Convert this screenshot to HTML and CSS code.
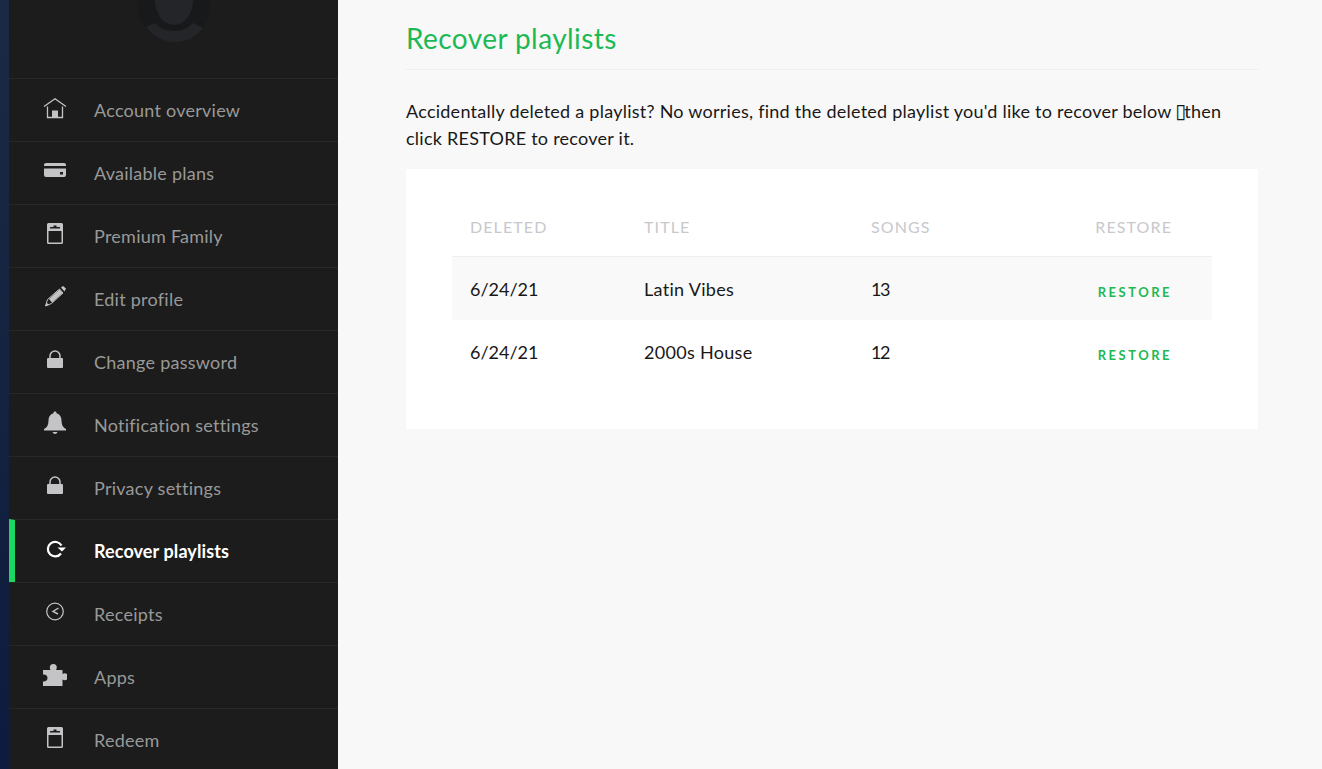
FILE: index.html
```html
<!DOCTYPE html>
<html lang="en">
<head>
<meta charset="utf-8">
<title>Recover playlists</title>
<link rel="stylesheet" href="styles.css">
</head>
<body>
<div class="strip"></div>
<aside class="sidebar">
  <div class="avatar">
    <svg width="72" height="42" viewBox="0 0 72 42"><circle cx="36" cy="6" r="36" fill="#17191a"/><path d="M8 27L17 23Q24 31 36 31Q48 31 55 23L65 28A36 36 0 0 1 36 42A36 36 0 0 1 8 27Z" fill="#242528"/><ellipse cx="36" cy="0" rx="19" ry="25" fill="#242528"/></svg>
  </div>
  <nav class="nav">
    <a class="item"><svg class="ico" viewBox="0 0 24 24"><path d="M1 10.500L12 2.800L23 10.500" fill="none" stroke="currentColor" stroke-width="1.300"/><path d="M4.500 10.500V21.500H19.500V10.500" fill="none" stroke="currentColor" stroke-width="1.300"/><path d="M9 21.500V14.500H15V21.500Z" fill="currentColor"/></svg><span>Account overview</span></a>
    <a class="item"><svg class="ico" viewBox="0 0 24 24"><path d="M3 4H21A2 2 0 0 1 23 6V7H1V6A2 2 0 0 1 3 4ZM1 9.500H23V16A2 2 0 0 1 21 18H3A2 2 0 0 1 1 16ZM17 13V15.500H20V13Z" fill="currentColor" fill-rule="evenodd"/></svg><span>Available plans</span></a>
    <a class="item"><svg class="ico" viewBox="0 0 24 24"><path d="M5.500 1H18.500A1.500 1.500 0 0 1 20 2.500V20.500A1.500 1.500 0 0 1 18.500 22H5.500A1.500 1.500 0 0 1 4 20.500V2.500A1.500 1.500 0 0 1 5.500 1ZM5.500 9V20.500H18.500V9ZM7 5V6.500H17V5H13.500V3.500H10.500V5Z" fill="currentColor" fill-rule="evenodd"/></svg><span>Premium Family</span></a>
    <a class="item"><svg class="ico" viewBox="0 0 24 24"><path d="M2.500 21L4.500 14.500L16.500 4L20 8L8.500 18.500Z" fill="none" stroke="currentColor" stroke-width="1"/><path d="M6 14L16.500 4.500L19.500 8L9 17.500Z" fill="currentColor"/><path d="M18 2.500L20 1L23 3.500L21.500 6.500Z" fill="currentColor"/><path d="M2.500 21L3.500 17.500L6 20Z" fill="currentColor"/></svg><span>Edit profile</span></a>
    <a class="item"><svg class="ico" viewBox="0 0 24 24"><path d="M7 10V8A5 5 0 0 1 17 8V10" fill="none" stroke="currentColor" stroke-width="1.500"/><rect x="4" y="10" width="16" height="10" rx="1" fill="currentColor"/></svg><span>Change password</span></a>
    <a class="item"><svg class="ico" viewBox="0 0 24 24"><path d="M12 0.500C13 0.500 13.500 1.200 13.500 2.200C17 3.200 18.500 6 18.500 9.500C18.500 14 20 16.500 23 18V19.500H1V18C4 16.500 5.500 14 5.500 9.500C5.500 6 7 3.200 10.500 2.200C10.500 1.200 11 0.500 12 0.500ZM9.500 21H14.500C14 22.300 13 23 12 23C11 23 10 22.300 9.500 21Z" fill="currentColor"/></svg><span>Notification settings</span></a>
    <a class="item"><svg class="ico" viewBox="0 0 24 24"><path d="M7 10V8A5 5 0 0 1 17 8V10" fill="none" stroke="currentColor" stroke-width="1.500"/><rect x="4" y="10" width="16" height="10" rx="1" fill="currentColor"/></svg><span>Privacy settings</span></a>
    <a class="item active"><svg class="ico" viewBox="0 0 24 24"><path d="M18.500 8.500A7.300 7.300 0 1 0 18 16.500" fill="none" stroke="currentColor" stroke-width="2.200"/><path d="M14.500 10.500H23L19 14.500Z" fill="currentColor"/></svg><span>Recover playlists</span></a>
    <a class="item"><svg class="ico" viewBox="0 0 24 24"><circle cx="12" cy="11.500" r="8.300" fill="none" stroke="currentColor" stroke-width="1.200"/><path d="M15.500 8L10 11.500L15 14" fill="none" stroke="currentColor" stroke-width="1.400"/></svg><span>Receipts</span></a>
    <a class="item"><svg class="ico" viewBox="0 0 24 24"><path d="M0 7H7.500C7 6 6.800 5.500 6.800 4.500A3.500 3.500 0 0 1 13.800 4.500C13.800 5.500 13.500 6 13 7H19.500V11C20.200 10.500 21 10.300 21.500 10.300A3.500 3.500 0 0 1 21.500 17.300C21 17.300 20.200 17 19.500 16.500V23H0V18.500C2.500 18.800 4.500 17.500 4.500 15C4.500 12.500 2.500 11 0 11.500Z" fill="currentColor"/></svg><span>Apps</span></a>
    <a class="item"><svg class="ico" viewBox="0 0 24 24"><path d="M5.500 1H18.500A1.500 1.500 0 0 1 20 2.500V20.500A1.500 1.500 0 0 1 18.500 22H5.500A1.500 1.500 0 0 1 4 20.500V2.500A1.500 1.500 0 0 1 5.500 1ZM5.500 9V20.500H18.500V9ZM7 5V6.500H17V5H13.500V3.500H10.500V5Z" fill="currentColor" fill-rule="evenodd"/></svg><span>Redeem</span></a>
  </nav>
</aside>
<main class="main">
  <h1 class="title">Recover playlists</h1>
  <p class="intro">Accidentally deleted a playlist? No worries, find the deleted playlist you'd like to recover below <span class="tofu">▯</span>then click RESTORE to recover it.</p>
  <section class="card">
    <table class="table">
      <thead>
        <tr><th class="c1">Deleted</th><th class="c2">Title</th><th class="c3">Songs</th><th class="c4">Restore</th></tr>
      </thead>
      <tbody>
        <tr class="odd"><td class="date">6/24/21</td><td>Latin Vibes</td><td class="count">13</td><td class="c4"><a class="restore">RESTORE</a></td></tr>
        <tr><td class="date">6/24/21</td><td>2000s House</td><td class="count">12</td><td class="c4"><a class="restore">RESTORE</a></td></tr>
      </tbody>
    </table>
  </section>
</main>
</body>
</html>
```
FILE: styles.css
```css
* { box-sizing: border-box; }
html, body { height: 100%; }
body {
  margin: 0;
  display: flex;
  height: 769px;
  overflow: hidden;
  background: #f8f8f8;
  font-family: "Lato", "Liberation Sans", sans-serif;
  color: #181818;
}
.strip {
  width: 9px;
  flex: none;
  background: linear-gradient(180deg, #1a2a45 0%, #14233f 50%, #0e1b3f 100%);
}
.sidebar {
  width: 329px;
  flex: none;
  background: #1c1c1c;
}
.avatar {
  height: 78px;
  display: flex;
  justify-content: center;
  align-items: flex-start;
}
.avatar svg { display: block; margin-left: 1px; }
.item {
  display: flex;
  align-items: center;
  height: 63px;
  border-top: 1px solid #282828;
  padding-left: 34px;
  color: #999;
  font-size: 18px;
  letter-spacing: 0.25px;
}
.ico {
  width: 24px;
  height: 24px;
  flex: none;
  color: #c4c4c6;
  margin-right: 27px;
  margin-bottom: 5px;
}
.active {
  color: #fff;
  font-weight: 700;
  letter-spacing: 0.1px;
  padding-left: 28px;
  border-left: 6px solid #1ed760;
}
.active .ico { color: #fff; }
.main {
  flex: 1;
  padding: 0 64px 0 68px;
}
.title {
  margin: 0;
  height: 70px;
  padding-top: 20px;
  font-size: 28px;
  line-height: 36px;
  font-weight: 400;
  letter-spacing: 0.42px;
  color: #1db954;
  border-bottom: 1px solid #eeeeee;
}
.intro {
  margin: 28px 0 17px;
  max-width: 830px;
  font-size: 18px;
  line-height: 27px;
  color: #181818;
  letter-spacing: 0.25px;
}
.tofu {
  font-family: "DejaVu Sans", sans-serif;
  font-size: 20px;
  font-weight: 700;
  line-height: 0;
  margin-left: -1px;
  letter-spacing: -2px;
}
.card {
  background: #fff;
  height: 260px;
  padding: 24px 46px 0;
}
.table {
  width: 760px;
  border-collapse: separate;
  border-spacing: 0;
  table-layout: fixed;
  font-size: 18px;
  letter-spacing: 0.3px;
}
th {
  height: 64px;
  padding: 3px 0 0 18px;
  text-align: left;
  font-size: 16px;
  font-weight: 400;
  letter-spacing: 1.1px;
  text-transform: uppercase;
  color: #c8c8cc;
  border-bottom: 1px solid #eeeeee;
}
td {
  height: 63px;
  padding: 0 0 0 18px;
  color: #181818;
}
.date { letter-spacing: 0; }
.count { letter-spacing: -1.4px; }
.c1 { width: 174px; }
.c2 { width: 227px; }
.c3 { width: 190px; }
th.c4, td.c4 { text-align: right; padding-right: 40px; }
.odd { background: #f9f9f9; }
.restore {
  position: relative;
  top: 1px;
  color: #1db954;
  font-size: 13px;
  font-weight: 700;
  letter-spacing: 2.5px;
}
```
